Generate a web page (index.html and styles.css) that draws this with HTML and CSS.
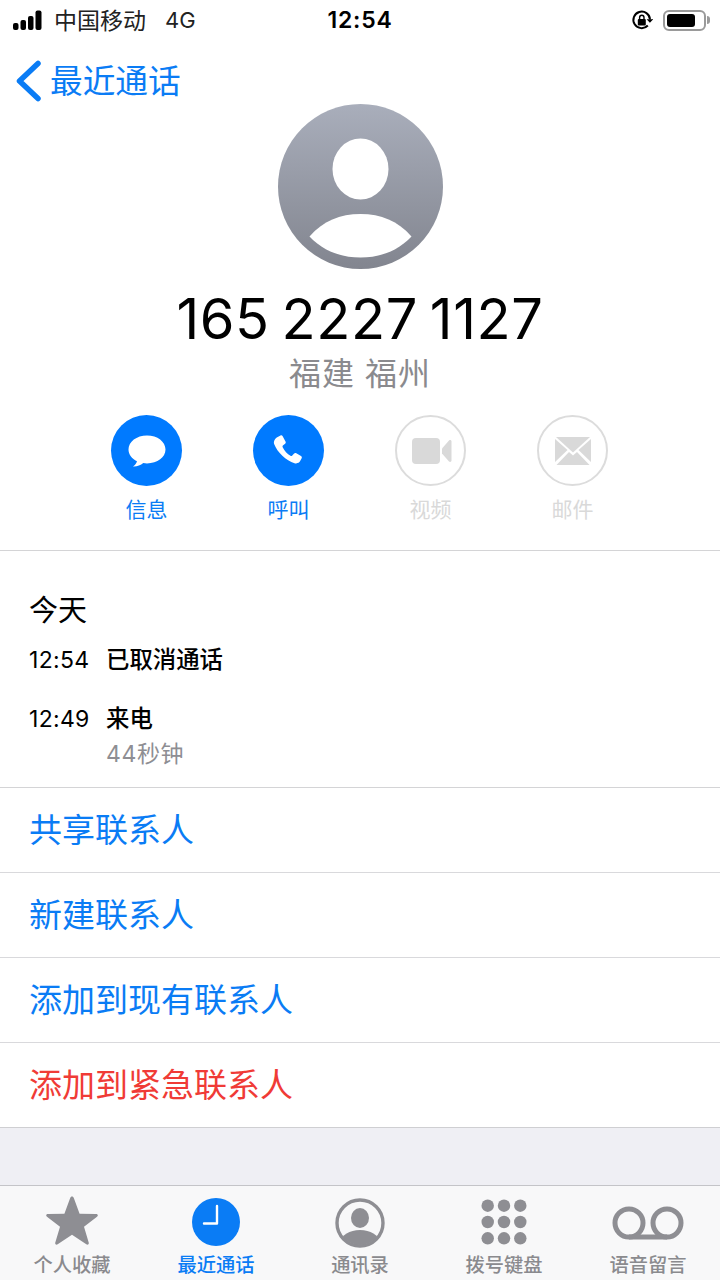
FILE: index.html
```html
<!DOCTYPE html>
<html lang="zh">
<head>
<meta charset="utf-8">
<title>最近通话</title>
<link rel="stylesheet" href="styles.css">
</head>
<body>
<div class="phone">
  <header class="status">
    <div class="status-left">
      <svg class="signal" width="34" height="20" viewBox="0 0 34 20"><rect x="0" y="13" width="5.5" height="7" rx="2"/><rect x="7.5" y="10" width="5.5" height="10" rx="2"/><rect x="15" y="6" width="5.5" height="14" rx="2"/><rect x="22.5" y="0.5" width="6" height="19.5" rx="2"/></svg>
      <span class="carrier">中国移动</span>
      <span class="net">4G</span>
    </div>
    <div class="clock">12:54</div>
    <div class="status-right">
      <svg width="22" height="22" viewBox="0 0 22 22" class="lock"><path d="M16.8 16.5A8.3 8.3 0 1 1 19 10.5" fill="none" stroke="#000" stroke-width="2"/><path d="M15.6 10.2h6.6l-3.3 3.6z" fill="#000"/><rect x="6.8" y="10" width="8" height="6.4" rx="1"/><path d="M8.6 10V8.4a2.2 2.2 0 0 1 4.4 0V10" fill="none" stroke="#000" stroke-width="1.4"/></svg>
      <div class="battery"><div class="battery-fill"></div></div>
      <div class="battery-cap"></div>
    </div>
  </header>

  <nav class="nav">
    <svg width="26" height="42" viewBox="0 0 26 42" class="chev"><path d="M23 3.500 L4.500 21 L23 38.500" fill="none" stroke="#0a7cf5" stroke-width="5.500" stroke-linecap="round" stroke-linejoin="round"/></svg>
    <span class="nav-title">最近通话</span>
  </nav>

  <section class="hero">
    <svg class="avatar" width="165" height="165" viewBox="0 0 165 165">
      <defs><linearGradient id="av" x1="0" y1="0" x2="0" y2="1"><stop offset="0" stop-color="#a9aebb"/><stop offset="1" stop-color="#82858f"/></linearGradient></defs>
      <circle cx="82.5" cy="82.5" r="82.5" fill="url(#av)"/>
      <ellipse cx="82.5" cy="65" rx="28" ry="30.5" fill="#fff"/>
      <path d="M31.5 132.5 C45 117 62 110 82.5 110 C103 110 120 117 133.5 132.5 C120 147 102 153.5 82.5 153.5 C63 153.5 45 147 31.5 132.5Z" fill="#fff"/>
    </svg>
    <h1 class="number">165 2227 1127</h1>
    <div class="location">福建 福州</div>
    <div class="actions">
      <div class="action">
        <div class="action-circle on">
          <svg width="40" height="36" viewBox="0 -1.500 40 36"><path d="M20 1C9.500 1 1.500 7.300 1.500 15c0 5 3.300 9.300 8.500 11.700-.5 2-2.200 4-4 5.300 3.500.3 7.500-1 10.300-3.400 1.200.2 2.400.3 3.700.3 10.500 0 18.500-6.100 18.500-13.900S30.500 1 20 1z" fill="#fff"/></svg>
        </div>
        <span class="action-label">信息</span>
      </div>
      <div class="action">
        <div class="action-circle on">
          <svg width="31" height="31" viewBox="1.500 0.500 33 33"><path d="M6.500 2.500 9.500 1c1-.4 1.800 0 2.300.9l3 5.600c.5.900.3 1.700-.4 2.300l-2.400 2c-.5.500-.5 1-.2 1.700 1.700 3.500 5 7.300 8.300 9.200.7.300 1.200.3 1.700-.2l2.200-2.200c.7-.7 1.400-.8 2.300-.3l5 2.900c.9.600 1.200 1.400.7 2.400l-1.600 3c-1 1.900-3.300 2.900-6 2.200C15.500 28 6 19 2.700 10.200 1.800 7 3.700 3.900 6.500 2.500z" fill="#fff"/></svg>
        </div>
        <span class="action-label">呼叫</span>
      </div>
      <div class="action off">
        <div class="action-circle">
          <svg width="43" height="26" viewBox="-3 0 43 26"><rect x="0" y="0" width="28" height="26" rx="4" fill="#d9d9d9"/><path d="M30 10.500 37 2.500c1-.9 2.500-.4 2.500 1V22.500c0 1.400-1.500 1.900-2.500 1L30 15.500z" fill="#d9d9d9"/></svg>
        </div>
        <span class="action-label">视频</span>
      </div>
      <div class="action off">
        <div class="action-circle">
          <svg width="36" height="28" viewBox="0 0 36 28"><path d="M1 0h34L18 15.500z" fill="#d9d9d9"/><path d="M0 2v23l12.500-12zM36 2v23L23.500 13z" fill="#d9d9d9"/><path d="M1.500 28h33L22 15l-4 3.500-4-3.500z" fill="#d9d9d9"/></svg>
        </div>
        <span class="action-label">邮件</span>
      </div>
    </div>
  </section>

  <section class="history">
    <h2 class="day">今天</h2>
    <div class="call first">
      <span class="call-time">12:54</span>
      <span class="call-type">已取消通话</span>
    </div>
    <div class="call second">
      <span class="call-time">12:49</span>
      <div class="call-info">
        <span class="call-type">来电</span>
        <span class="call-length">44秒钟</span>
      </div>
    </div>
  </section>

  <section class="list">
    <div class="row">共享联系人</div>
    <div class="row">新建联系人</div>
    <div class="row">添加到现有联系人</div>
    <div class="row danger">添加到紧急联系人</div>
  </section>

  <div class="spacer"></div>

  <footer class="tabs">
    <div class="tab">
      <svg class="ic-star" width="54" height="50" viewBox="0 0 54 50"><path d="M27 1.500c.9 0 1.500.6 1.900 1.700l5.700 15.500 16.300.3c2 0 2.600 1.600 1.100 2.800L39 31.800l4.700 15.700c.5 1.800-.9 2.800-2.400 1.700L27 39.800 12.700 49.200c-1.500 1.100-2.900.1-2.400-1.700L15 31.800 2 21.800C.5 20.600 1.100 19 3.100 19l16.300-.3 5.700-15.500c.4-1.100 1-1.700 1.900-1.700z" fill="#8e8e93"/></svg>
      <span class="tab-label">个人收藏</span>
    </div>
    <div class="tab active">
      <svg class="ic-clock" width="48" height="48" viewBox="0 0 48 48"><circle cx="24" cy="24" r="24" fill="#0a7cf5"/><path d="M25 8v17.500H12" fill="none" stroke="#fff" stroke-width="2.400" stroke-linecap="round" stroke-linejoin="round"/></svg>
      <span class="tab-label">最近通话</span>
    </div>
    <div class="tab">
      <svg class="ic-clock" width="50" height="50" viewBox="0 0 50 50"><defs><clipPath id="cc"><circle cx="25" cy="25" r="22"/></clipPath></defs><circle cx="25" cy="25" r="23" fill="none" stroke="#8e8e93" stroke-width="3.400"/><ellipse cx="25" cy="20" rx="9" ry="10" fill="#8e8e93"/><ellipse cx="25" cy="44" rx="19" ry="12" fill="#8e8e93" clip-path="url(#cc)"/></svg>
      <span class="tab-label">通讯录</span>
    </div>
    <div class="tab">
      <svg class="ic-keys" width="46" height="46" viewBox="0 0 48 48" fill="#8e8e93"><circle cx="7" cy="7" r="6.500"/><circle cx="24" cy="7" r="6.500"/><circle cx="41" cy="7" r="6.500"/><circle cx="7" cy="24" r="6.500"/><circle cx="24" cy="24" r="6.500"/><circle cx="41" cy="24" r="6.500"/><circle cx="7" cy="41" r="6.500"/><circle cx="24" cy="41" r="6.500"/><circle cx="41" cy="41" r="6.500"/></svg>
      <span class="tab-label">拨号键盘</span>
    </div>
    <div class="tab">
      <svg class="vm" width="72" height="34" viewBox="0 0 72 34"><circle cx="17" cy="17" r="14" fill="none" stroke="#8e8e93" stroke-width="5"/><circle cx="55" cy="17" r="14" fill="none" stroke="#8e8e93" stroke-width="5"/><path d="M17 31h38" stroke="#8e8e93" stroke-width="5"/></svg>
      <span class="tab-label">语音留言</span>
    </div>
  </footer>
</div>
</body>
</html>
```

FILE: styles.css
```css
* { box-sizing: border-box; }
html, body { margin: 0; padding: 0; background: #fff; }
body { font-family: "Inter", "Noto Sans CJK SC", "Noto Sans", sans-serif; color: #000; }
.phone { width: 720px; height: 1280px; display: flex; flex-direction: column; overflow: hidden; }

.status { height: 40px; display: grid; grid-template-columns: 1fr auto 1fr; align-items: center; padding: 0 10px 0 13px; flex: none; }
.status-left { display: flex; align-items: center; color: #111; }
.signal { fill: #000; margin-right: 7px; }
.carrier { font-size: 23px; color: #222; padding-bottom: 3px; }
.net { font-size: 22px; margin-left: 19px; color: #222; }
.clock { font-size: 23px; font-weight: 600; letter-spacing: .8px; margin-left: -3px; }
.status-right { display: flex; justify-content: flex-end; align-items: center; }
.lock { margin-right: 10px; }
.battery { width: 43px; height: 21px; border: 2px solid #9a9a9a; border-radius: 6px; padding: 2px; }
.battery-fill { width: 28px; height: 100%; background: #000; border-radius: 3px; }
.battery-cap { width: 3px; height: 8px; background: #9a9a9a; border-radius: 0 3px 3px 0; margin-left: 1px; }

.nav { height: 64px; flex: none; display: flex; align-items: center; padding: 18px 0 0 15px; color: #0a7cf5; }
.chev { margin-right: 9px; }
.nav-title { font-size: 32.7px; line-height: 1; }

.hero { height: 447px; flex: none; display: flex; flex-direction: column; align-items: center; border-bottom: 1px solid #d4d4d6; }
.avatar { display: block; flex: none; }
.number { margin: 13px 0 0; font-size: 56px; line-height: 74px; height: 74px; font-weight: 400; letter-spacing: .6px; word-spacing: -4.6px; }
.location { font-size: 32px; line-height: 46px; color: #8a8a8e; letter-spacing: 1px; margin-top: -5px; }
.actions { display: flex; gap: 71px; margin: 18px 1px 0 0; }
.action { width: 71px; display: flex; flex-direction: column; align-items: center; }
.action-circle { width: 71px; height: 71px; border-radius: 50%; display: flex; align-items: center; justify-content: center; border: 2px solid #dcdcdc; }
.action-circle.on { background: #007aff; border: 0; }
.action-label { font-size: 21px; line-height: 30px; margin-top: 9px; color: #0a7cf5; white-space: nowrap; }
.off .action-label { color: #d9d9d9; }

.history { height: 237px; flex: none; padding: 0 0 0 29px; display: flex; flex-direction: column; border-bottom: 1px solid #d4d4d6; }
.day { margin: 40px 0 0; font-size: 29px; line-height: 40px; font-weight: 400; }
.call { display: flex; align-items: flex-start; font-size: 23px; line-height: 32px; }
.first { margin-top: 13px; }
.second { margin-top: 27px; }
.call-time { width: 77px; flex: none; letter-spacing: .3px; }
.call-type { font-weight: 500; display: block; font-size: 23.4px; }
.call-info { display: flex; flex-direction: column; }
.call-length { color: #8e8e93; margin-top: 3px; letter-spacing: .6px; }

.list { flex: none; }
.row { height: 85px; padding: 0 0 4px 29px; display: flex; align-items: center; font-size: 33px; color: #0a7cf5; border-bottom: 1px solid #d9d9dc; }
.row.danger { color: #f03b36; border-bottom-color: #cfcfd2; }

.spacer { flex: 1; background: #efeff4; }

.tabs { height: 95px; flex: none; display: grid; grid-template-columns: repeat(5, 1fr); background: #f8f8f9; border-top: 1px solid #c4c4c8; }
.tab { display: flex; flex-direction: column; align-items: center; height: 94px; justify-content: flex-end; color: #8a8a8e; position: relative; }
.tab svg { position: absolute; }
.tab svg.ic-star { top: 9px; }
.tab svg.ic-clock { top: 12px; }
.tab svg.ic-keys { top: 13px; }
.tab svg.vm { top: 20px; }
.tab.active { color: #0a7cf5; }
.tab-label { font-size: 19.25px; line-height: 26px; margin-bottom: 2px; font-weight: 500; }
```
